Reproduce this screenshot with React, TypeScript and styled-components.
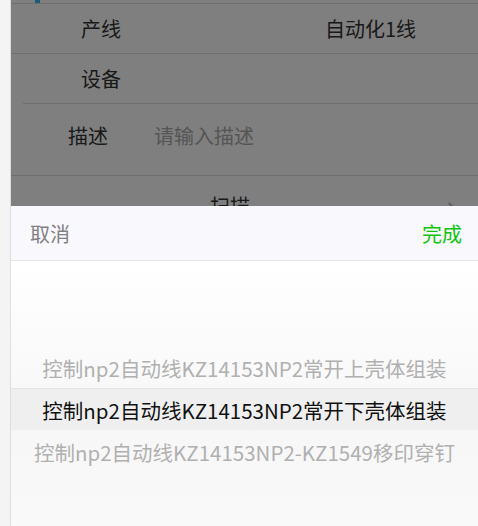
import styled, { createGlobalStyle } from 'styled-components';

const GlobalStyle = createGlobalStyle`
  html, body {
    margin: 0;
    padding: 0;
    height: 100%;
    overflow: hidden;
  }
  body {
    font-family: "Noto Sans CJK SC", "Noto Sans", sans-serif;
    background: #fff;
  }
`;

const items = [
  '控制np2自动线KZ14153NP2常开上壳体组装',
  '控制np2自动线KZ14153NP2常开下壳体组装',
  '控制np2自动线KZ14153NP2-KZ1549移印穿钉',
];
const selected = 1;

const App = () => {
  return (
    <>
      <GlobalStyle />
      <Page>
        <SideStrip />
        <Main>
          <Form>
            <TopBar>
              <BlueMark />
            </TopBar>
            <Divider />
            <Row>
              <Label>产线</Label>
              <Value>自动化1线</Value>
            </Row>
            <Divider />
            <Row>
              <Label>设备</Label>
            </Row>
            <Divider $inset={12} />
            <DescRow>
              <DescLabel>描述</DescLabel>
              <Placeholder>请输入描述</Placeholder>
            </DescRow>
            <Divider />
            <ScanRow>
              <ScanText>扫描</ScanText>
              <Chevron />
            </ScanRow>
          </Form>
          <Mask />
          <Picker>
            <PickerHeader>
              <CancelBtn>取消</CancelBtn>
              <DoneBtn>完成</DoneBtn>
            </PickerHeader>
            <PickerBody>
              <Indicator />
              <ItemList>
                {items.map((text, i) => (
                  <Item key={i} $active={i === selected}>
                    {text}
                  </Item>
                ))}
              </ItemList>
            </PickerBody>
          </Picker>
        </Main>
      </Page>
    </>
  );
};

export default App;

const Page = styled.div`
  display: flex;
  width: 478px;
  height: 526px;
`;

const SideStrip = styled.div`
  width: 10px;
  flex-shrink: 0;
  background: #f4f4f4;
  border-right: 1px solid #dedede;
`;

const Main = styled.div`
  position: relative;
  flex: 1;
  overflow: hidden;
  background: #fff;
`;

const Form = styled.div`
  display: flex;
  flex-direction: column;
`;

const TopBar = styled.div`
  height: 3px;
  padding-left: 24px;
`;

const BlueMark = styled.div`
  width: 5px;
  height: 3px;
  background: #2bb8ff;
`;

const Divider = styled.div<{ $inset?: number }>`
  height: 1px;
  background: #ddd;
  margin-left: ${(p) => p.$inset ?? 0}px;
`;

const Row = styled.div`
  display: flex;
  align-items: center;
  height: 49px;
  font-size: 20px;
  color: #333;
`;

const Label = styled.span`
  width: 245px;
  padding-left: 70px;
`;

const Value = styled.span`
  color: #333;
  margin-left: -1px;
`;

const DescRow = styled.div`
  display: flex;
  align-items: flex-start;
  height: 71px;
  padding-top: 17px;
  box-sizing: border-box;
  font-size: 20px;
`;

const DescLabel = styled.span`
  color: #333;
  padding-left: 57px;
  width: 86px;
`;

const Placeholder = styled.span`
  color: #aaa;
`;

const ScanRow = styled.div`
  display: flex;
  align-items: center;
  justify-content: space-between;
  height: 56px;
  padding: 0 22px 0 199px;
  font-size: 20px;
  color: #333;
`;

const ScanText = styled.span`
  padding-top: 2px;
`;

const Chevron = styled.span`
  width: 11px;
  height: 11px;
  border-top: 2px solid #bbb;
  border-right: 2px solid #bbb;
  transform: rotate(45deg);
  margin-top: 14px;
`;

const Mask = styled.div`
  position: absolute;
  inset: 0;
  background: rgba(0, 0, 0, 0.5);
`;

const Picker = styled.div`
  position: absolute;
  left: 0;
  right: 0;
  top: 206px;
  display: flex;
  flex-direction: column;
  background: #fff;
`;

const PickerHeader = styled.div`
  display: flex;
  align-items: center;
  justify-content: space-between;
  height: 54px;
  padding: 0 16px 0 19px;
  background: #f9f8fc;
  border-bottom: 1px solid #e5e5ec;
  font-size: 20px;
`;

const CancelBtn = styled.span`
  color: #808085;
`;

const DoneBtn = styled.span`
  color: #0bc40b;
`;

const PickerBody = styled.div`
  position: relative;
  height: 294px;
  background: linear-gradient(180deg, #ffffff 0%, #f9f9f9 40%, #f7f7f7 60%, #fafafa 100%);
`;

const Indicator = styled.div`
  position: absolute;
  left: 0;
  right: 0;
  top: 127px;
  height: 42px;
  box-sizing: border-box;
  background: #efefef;
  border-top: 1px solid #e3e3e3;
`;

const ItemList = styled.div`
  position: relative;
  display: flex;
  flex-direction: column;
  padding-top: 86px;
`;

const Item = styled.div<{ $active: boolean }>`
  height: 42px;
  line-height: 42px;
  text-align: center;
  white-space: nowrap;
  font-size: 20.5px;
  color: ${(p) => (p.$active ? '#111' : '#b0b0b0')};
`;
